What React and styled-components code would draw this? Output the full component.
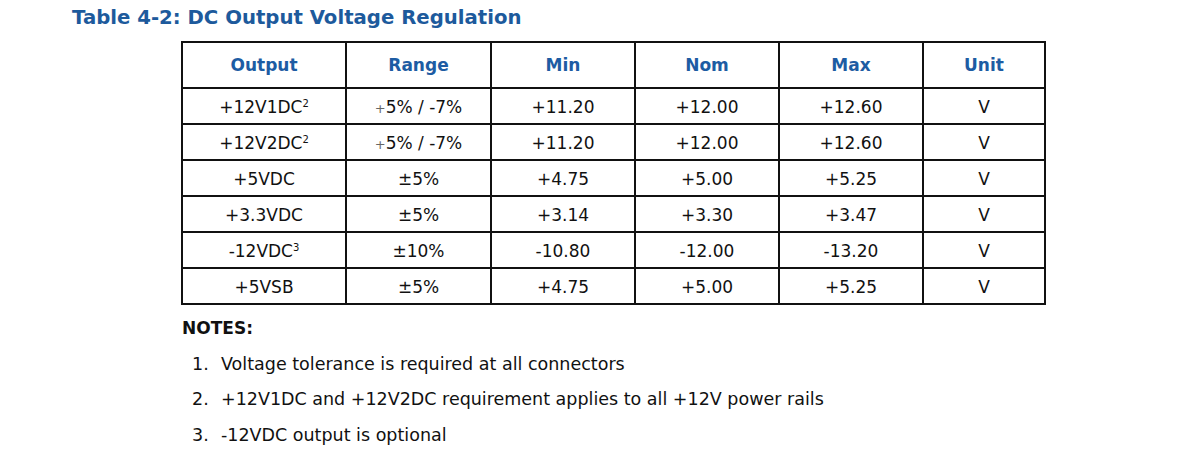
import React from "react";
import styled, { createGlobalStyle } from "styled-components";

const Global = createGlobalStyle`
  html, body { margin: 0; padding: 0; background: #fff; }
  body { font-family: Verdana, "DejaVu Sans", sans-serif; color: #111; }
`;

const Page = styled.div`
  width: 1200px;
  height: 456px;
  padding: 4px 0 0 72px;
  box-sizing: border-box;
  overflow: hidden;
`;

const Title = styled.h2`
  margin: 0;
  font-size: 19.7px;
  font-weight: bold;
  color: #1d5a9c;
  line-height: 28px;
`;

const Table = styled.table`
  margin: 9px 0 0 109px;
  border-collapse: collapse;
  table-layout: fixed;
  width: 863px;
  border: 2px solid #111;
`;

const HeadCell = styled.th`
  border: 2px solid #111;
  height: 44px;
  padding: 0;
  font-size: 17px;
  font-weight: bold;
  color: #1d5ca3;
  text-align: center;
  vertical-align: middle;
`;

const Cell = styled.td`
  border: 2px solid #111;
  height: 33px;
  padding: 1px 0 0;
  font-size: 17px;
  color: #111;
  text-align: center;
  vertical-align: middle;
`;

const Sup = styled.sup`
  font-size: 10px;
  vertical-align: 6px;
  line-height: 0;
`;

const Plus = styled.span`
  font-size: 13px;
  color: #666;
`;

const Notes = styled.div`
  margin: 12px 0 0 110px;
`;

const NotesTitle = styled.div`
  font-size: 17px;
  font-weight: bold;
  line-height: 22px;
`;

const List = styled.ol`
  margin: 0;
  padding: 0;
  list-style: none;
`;

const Item = styled.li`
  display: flex;
  font-size: 17.5px;
  line-height: 22px;
  margin-top: 13.5px;
`;

const Num = styled.span`
  width: 29px;
  padding-left: 10px;
  flex: none;
`;

const widths = [164, 145, 144, 144, 144, 122];
const headers = ["Output", "Range", "Min", "Nom", "Max", "Unit"];

const rows = [
  [<>+12V1DC<Sup>2</Sup></>, <><Plus>+</Plus>5% / -7%</>, "+11.20", "+12.00", "+12.60", "V"],
  [<>+12V2DC<Sup>2</Sup></>, <><Plus>+</Plus>5% / -7%</>, "+11.20", "+12.00", "+12.60", "V"],
  ["+5VDC", "±5%", "+4.75", "+5.00", "+5.25", "V"],
  ["+3.3VDC", "±5%", "+3.14", "+3.30", "+3.47", "V"],
  [<>-12VDC<Sup>3</Sup></>, "±10%", "-10.80", "-12.00", "-13.20", "V"],
  ["+5VSB", "±5%", "+4.75", "+5.00", "+5.25", "V"],
];

const notes = [
  "Voltage tolerance is required at all connectors",
  "+12V1DC and +12V2DC requirement applies to all +12V power rails",
  "-12VDC output is optional",
];

export default function App() {
  return (
    <>
      <Global />
      <Page>
        <Title>Table 4-2: DC Output Voltage Regulation</Title>
        <Table>
          <colgroup>
            {widths.map((w, i) => (
              <col key={i} style={{ width: w }} />
            ))}
          </colgroup>
          <thead>
            <tr>
              {headers.map((h) => (
                <HeadCell key={h}>{h}</HeadCell>
              ))}
            </tr>
          </thead>
          <tbody>
            {rows.map((r, i) => (
              <tr key={i}>
                {r.map((c, j) => (
                  <Cell key={j}>{c}</Cell>
                ))}
              </tr>
            ))}
          </tbody>
        </Table>
        <Notes>
          <NotesTitle>NOTES:</NotesTitle>
          <List>
            {notes.map((n, i) => (
              <Item key={i}>
                <Num>{i + 1}.</Num>
                <span>{n}</span>
              </Item>
            ))}
          </List>
        </Notes>
      </Page>
    </>
  );
}
